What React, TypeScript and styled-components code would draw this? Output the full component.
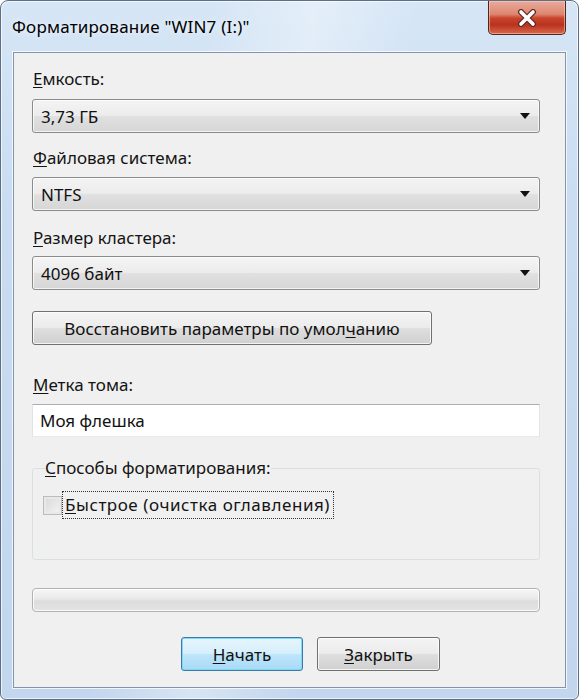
import React from 'react';
import styled, { createGlobalStyle } from 'styled-components';

const Global = createGlobalStyle`
  html, body { margin: 0; padding: 0; background: #ffffff; }
  body { font-family: "Noto Sans", "Open Sans", sans-serif; }
  * { box-sizing: border-box; }
`;

const Window = styled.div`
  width: 579px;
  height: 700px;
  border: 1px solid #5d6f86;
  border-radius: 8px 8px 6px 6px;
  background:
    linear-gradient(100deg, rgba(255, 255, 255, 0) 30%, rgba(255, 255, 255, 0.35) 45%, rgba(255, 255, 255, 0) 60%),
    linear-gradient(180deg, #d6e6f6 0%, #c9dcf1 30%, #c2d6ee 100%);
  box-shadow: inset 0 0 0 1px rgba(255, 255, 255, 0.65);
  display: flex;
  flex-direction: column;
  overflow: hidden;
`;

const TitleBar = styled.div`
  height: 51px;
  display: flex;
  justify-content: space-between;
  align-items: flex-start;
  padding: 0 12px 0 11px;
`;

const Title = styled.div`
  margin-top: 15px;
  font-size: 17px;
  line-height: 22px;
  color: #000;
  letter-spacing: 0.2px;
  text-shadow: 0 0 6px rgba(255, 255, 255, 0.9);
`;

const CloseButton = styled.div`
  width: 78px;
  height: 34px;
  border: 1px solid #4e2520;
  border-top: none;
  border-radius: 0 0 5px 5px;
  background: linear-gradient(
    180deg,
    #e9ab9c 0%,
    #dd8670 40%,
    #c9442c 52%,
    #b9331e 72%,
    #d7684c 100%
  );
  box-shadow: inset 0 0 0 1px rgba(255, 205, 190, 0.55);
  display: flex;
  align-items: center;
  justify-content: center;
`;

const Client = styled.div`
  flex: 1;
  margin: 0 12px 11px 12px;
  border: 1px solid #8196ad;
  box-shadow: 0 0 0 1px rgba(255, 255, 255, 0.75);
  background: #f0f0f0;
  padding: 15px 25px 0 18px;
  display: flex;
  flex-direction: column;
`;

const Label = styled.div<{ $mt: number; $mb: number }>`
  margin-top: ${(p) => p.$mt}px;
  margin-bottom: ${(p) => p.$mb}px;
  font-size: 17px;
  line-height: 22px;
  color: #141414;
  padding-left: 1px;
`;

const Mn = styled.span`
  text-decoration: underline;
  text-underline-offset: 2px;
`;

const Combo = styled.div`
  height: 34px;
  border: 1px solid #8a8b8c;
  border-radius: 3px;
  background: linear-gradient(180deg, #f4f4f4 0%, #ececec 48%, #e0e0e0 52%, #d6d6d6 100%);
  box-shadow: inset 0 0 0 1px rgba(255, 255, 255, 0.7);
  display: flex;
  align-items: center;
  justify-content: space-between;
  padding: 0 8px 0 8px;
  font-size: 17px;
  color: #111;
`;

const Arrow = styled.svg`
  width: 12px;
  height: 8px;
`;

const Spacer = styled.div<{ $h: number }>`
  height: ${(p) => p.$h}px;
  flex-shrink: 0;
`;

const PlainButton = styled.div<{ $w: number; $default?: boolean }>`
  width: ${(p) => p.$w}px;
  height: 34px;
  border: 1px solid ${(p) => (p.$default ? '#3a7bab' : '#707070')};
  border-radius: 3px;
  background: ${(p) =>
    p.$default
      ? 'linear-gradient(180deg, #e6f5fd 0%, #d6effc 48%, #bde5fb 52%, #a9daf5 100%)'
      : 'linear-gradient(180deg, #f4f4f4 0%, #ececec 48%, #dedede 52%, #d0d0d0 100%)'};
  box-shadow: inset 0 0 0 1px
    ${(p) => (p.$default ? 'rgba(120, 215, 245, 0.9)' : 'rgba(255, 255, 255, 0.75)')};
  display: flex;
  align-items: center;
  justify-content: center;
  font-size: 17px;
  color: #111;
`;

const Input = styled.div`
  height: 33px;
  background: #ffffff;
  border: 1px solid #e2e3ea;
  border-top-color: #abadb3;
  border-bottom-color: #e3e9ef;
  display: flex;
  align-items: center;
  padding-left: 7px;
  font-size: 17px;
  color: #111;
`;

const Group = styled.fieldset`
  margin: 20px 0 0 0;
  padding: 0 12px 40px 10px;
  border: 1px solid #dadfe3;
  border-radius: 3px;
  min-width: 0;
`;

const Legend = styled.legend`
  padding: 0;
  margin-left: 2px;
  font-size: 17px;
  line-height: 22px;
  color: #141414;
`;

const CheckRow = styled.div`
  margin-top: 12px;
  display: flex;
  align-items: center;
  gap: 0;
`;

const CheckBox = styled.div`
  width: 19px;
  height: 19px;
  border: 1px solid #bcbcbc;
  background: linear-gradient(135deg, #d8d8d8 0%, #f4f4f4 100%);
  box-shadow: inset 0 0 0 2px #e8e8e8;
`;

const Focus = styled.div`
  border: 1px dotted #333;
  padding: 1px 3px 1px 2px;
  font-size: 17px;
  line-height: 24px;
  letter-spacing: 0.55px;
  color: #141414;
`;

const Progress = styled.div`
  margin-top: 28px;
  height: 24px;
  border: 1px solid #b3b3b3;
  border-radius: 4px;
  background: linear-gradient(180deg, #f6f6f6 0%, #e9e9e9 45%, #dcdcdc 55%, #e4e4e4 100%);
  box-shadow: inset 0 0 0 1px rgba(255, 255, 255, 0.8);
`;

const ButtonRow = styled.div`
  margin-top: 25px;
  padding-left: 149px;
  display: flex;
  gap: 14px;
`;

const DropArrow = () => (
  <Arrow viewBox="0 0 12 8">
    <path d="M1 1 H11 L6 7 Z" fill="#111" />
  </Arrow>
);

export default function App() {
  return (
    <>
      <Global />
      <Window>
        <TitleBar>
          <Title>Форматирование "WIN7 (I:)"</Title>
          <CloseButton>
            <svg width="22" height="18" viewBox="0 0 22 18">
              <path d="M5 3 L17 15 M17 3 L5 15" stroke="#5a2a22" strokeWidth="6" strokeLinecap="round" />
              <path d="M5 3 L17 15 M17 3 L5 15" stroke="#ffffff" strokeWidth="3.6" strokeLinecap="round" />
            </svg>
          </CloseButton>
        </TitleBar>
        <Client>
          <Label $mt={0} $mb={9}>
            <Mn>Е</Mn>мкость:
          </Label>
          <Combo>
            <span>3,73 ГБ</span>
            <DropArrow />
          </Combo>
          <Label $mt={14} $mb={8}>
            <Mn>Ф</Mn>айловая система:
          </Label>
          <Combo>
            <span>NTFS</span>
            <DropArrow />
          </Combo>
          <Label $mt={16} $mb={7}>
            <Mn>Р</Mn>азмер кластера:
          </Label>
          <Combo>
            <span>4096 байт</span>
            <DropArrow />
          </Combo>
          <Spacer $h={21} />
          <PlainButton $w={400}>
            <span>
              Восстановить параметры по умол<Mn>ч</Mn>анию
            </span>
          </PlainButton>
          <Label $mt={29} $mb={8}>
            <Mn>М</Mn>етка тома:
          </Label>
          <Input>Моя флешка</Input>
          <Group>
            <Legend>
              <Mn>С</Mn>пособы форматирования:
            </Legend>
            <CheckRow>
              <CheckBox />
              <Focus>
                <Mn>Б</Mn>ыстрое (очистка оглавления)
              </Focus>
            </CheckRow>
          </Group>
          <Progress />
          <ButtonRow>
            <PlainButton $w={122} $default>
              <span>
                <Mn>Н</Mn>ачать
              </span>
            </PlainButton>
            <PlainButton $w={123}>
              <span>
                <Mn>З</Mn>акрыть
              </span>
            </PlainButton>
          </ButtonRow>
        </Client>
      </Window>
    </>
  );
}
